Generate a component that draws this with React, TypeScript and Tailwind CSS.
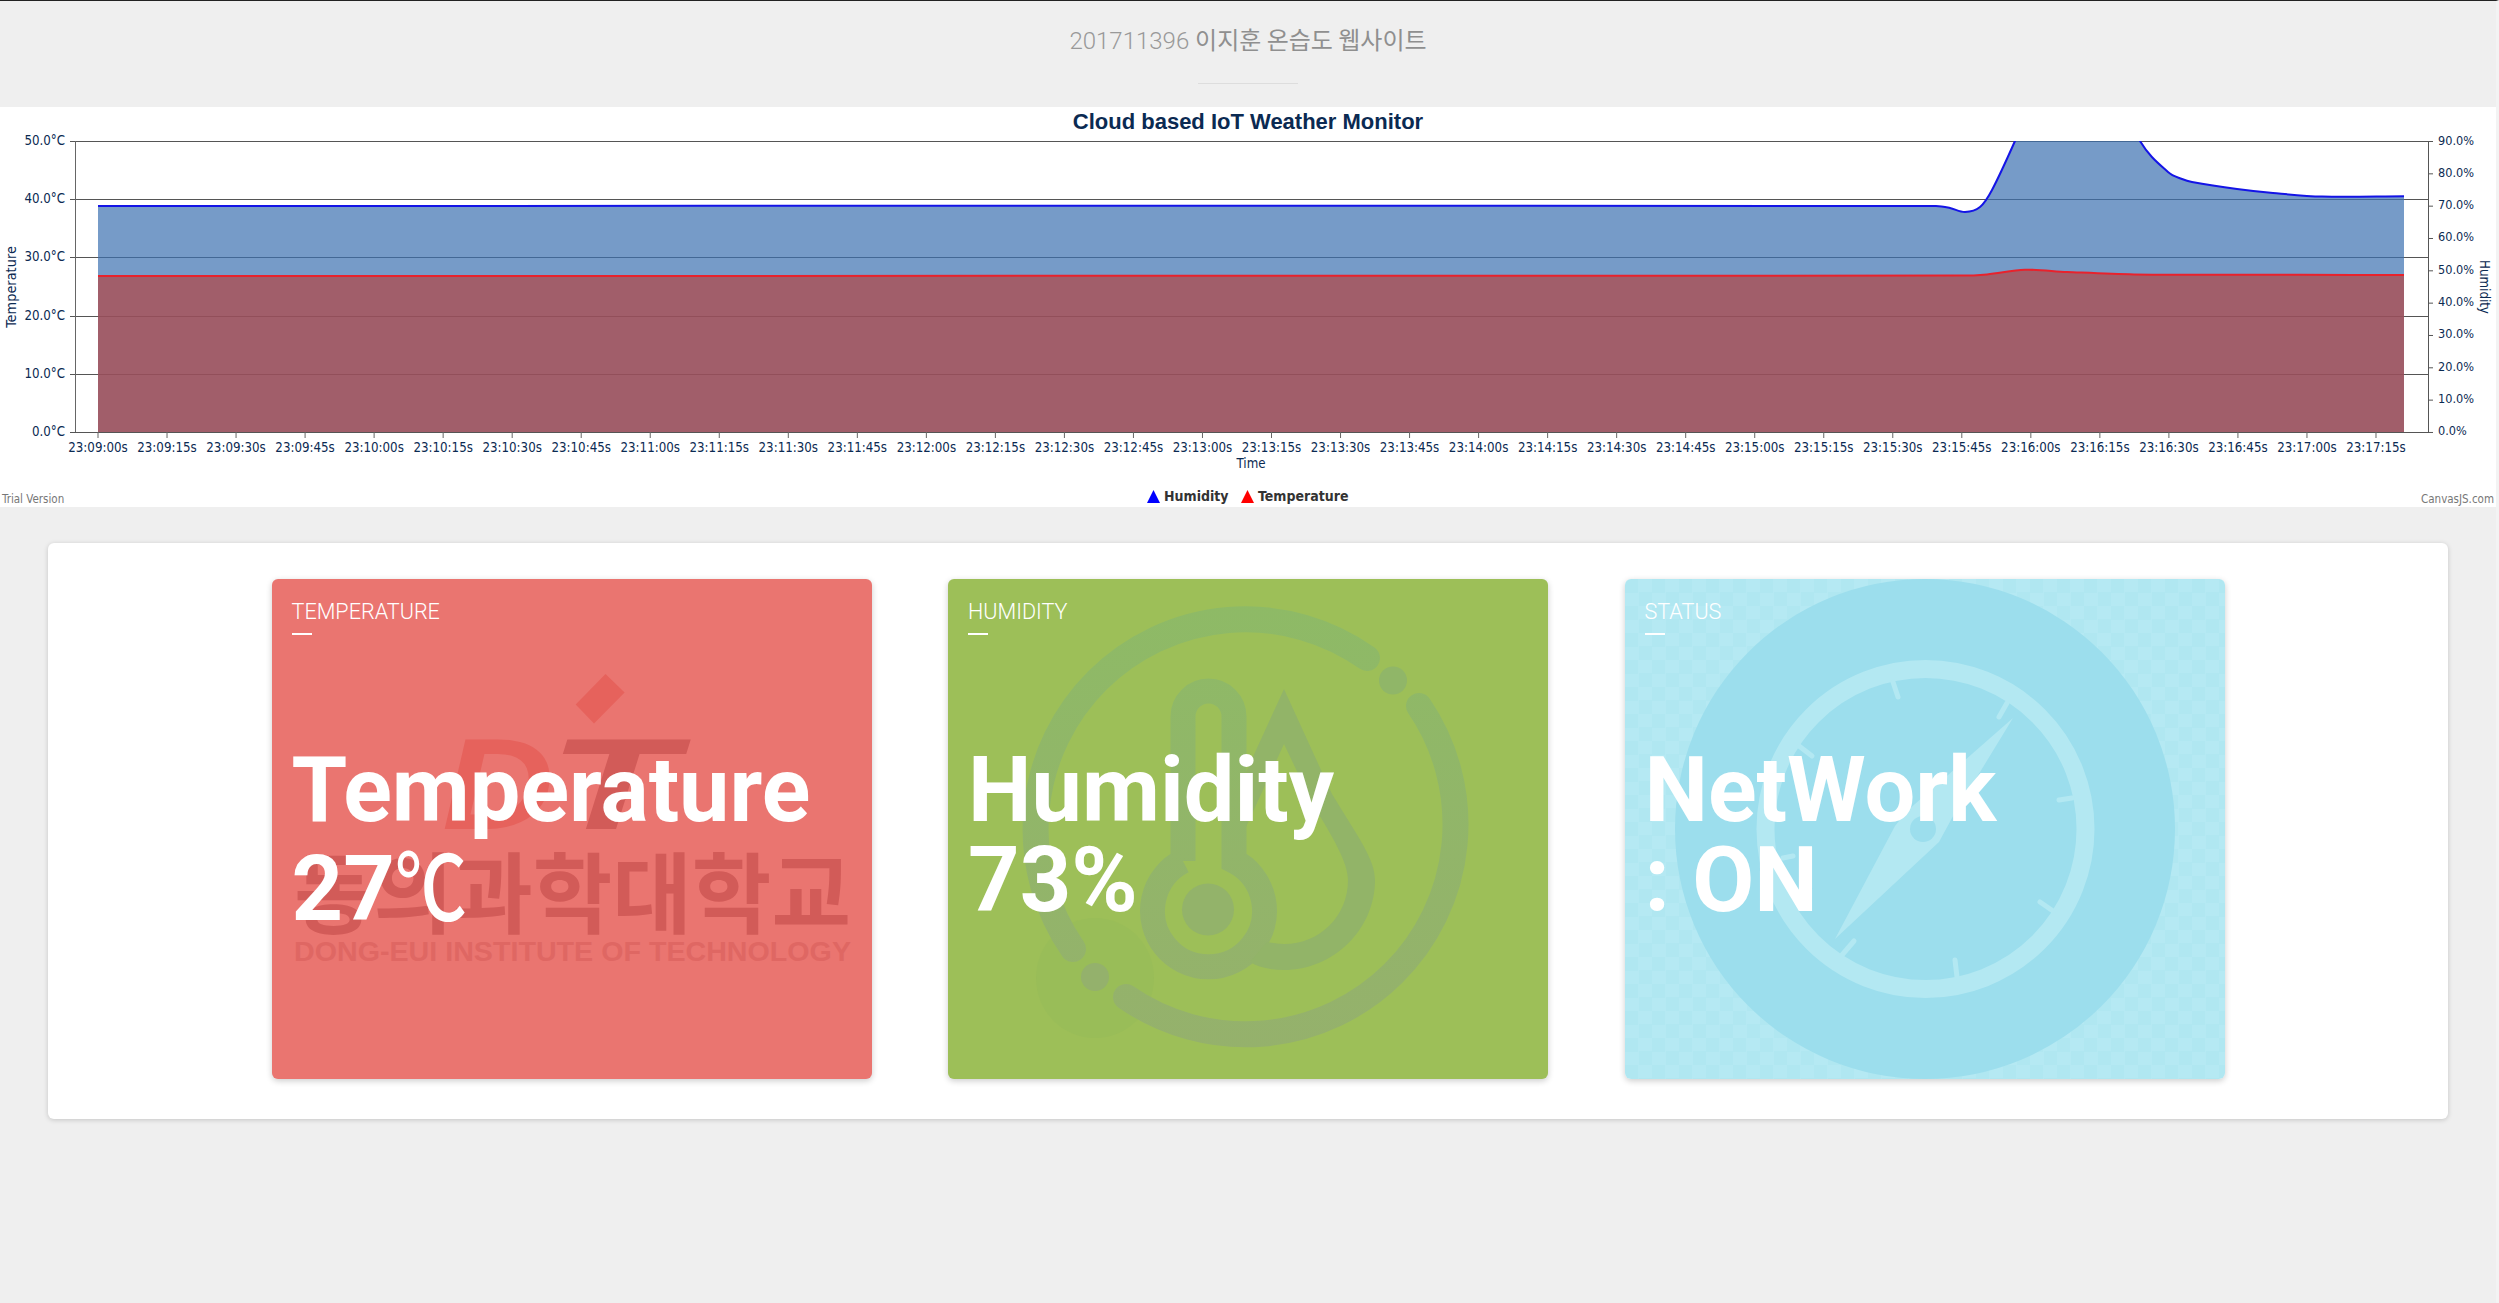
const xLabels = Array.from({ length: 34 }, (_, i) => {
  const total = 9 * 60 + i * 15;
  const min = String(Math.floor(total / 60)).padStart(2, '0');
  const sec = String(total % 60).padStart(2, '0');
  return { x: 98 + i * 69.03, text: `23:${min}:${sec}s` };
});

const gridYs = [141.5, 199.5, 257.5, 316.5, 374.5, 432.5];
const tempLabels = ['50.0°C', '40.0°C', '30.0°C', '20.0°C', '10.0°C', '0.0°C'];
const humLabels = ['90.0%', '80.0%', '70.0%', '60.0%', '50.0%', '40.0%', '30.0%', '20.0%', '10.0%', '0.0%'];

const humidity: [number, number][] = [
  [98, 206], [1936, 206], [1950, 208], [1965, 212], [1980, 207], [1992, 190], [2015, 141], [2032, 100],
  [2125, 100], [2140, 141], [2168, 172], [2182, 179], [2192, 182], [2237, 189], [2273, 193], [2322, 196.6], [2404, 196.3],
];
const temperature: [number, number][] = [
  [98, 276], [1960, 275.6], [1987, 274.4], [2025, 269.8], [2067, 272], [2134, 274.4], [2300, 274.8], [2404, 275],
];

// catmull-rom through the samples, canvasjs splineArea looks about like this
function spline(pts: [number, number][]) {
  let d = `M${pts[0][0]} ${pts[0][1]}`;
  for (let i = 0; i < pts.length - 1; i++) {
    const p0 = pts[Math.max(i - 1, 0)];
    const p1 = pts[i];
    const p2 = pts[i + 1];
    const p3 = pts[Math.min(i + 2, pts.length - 1)];
    const dx = p2[0] - p1[0];
    const m1 = ((p2[1] - p0[1]) / (p2[0] - p0[0] || 1)) * dx;
    const m2 = ((p3[1] - p1[1]) / (p3[0] - p1[0] || 1)) * dx;
    d += ` C${p1[0] + dx / 3} ${p1[1] + m1 / 3} ${p2[0] - dx / 3} ${p2[1] - m2 / 3} ${p2[0]} ${p2[1]}`;
  }
  return d;
}

function WeatherChart() {
  const humLine = spline(humidity);
  const tempLine = spline(temperature);
  return (
    <svg viewBox="0 107 2496 400" className="block h-[400px] w-full bg-white font-['DejaVu_Sans_Condensed','DejaVu_Sans',sans-serif]">
      <defs>
        <clipPath id="plot">
          <rect x="75" y="141" width="2353" height="292" />
        </clipPath>
      </defs>
      <text x="1248" y="129" textAnchor="middle" className="fill-[#0b2a52] font-['Liberation_Sans',sans-serif] text-[22px] font-bold">
        Cloud based IoT Weather Monitor
      </text>

      {gridYs.map((y) => (
        <line key={y} x1="70" x2="2428" y1={y} y2={y} className="stroke-[#555555]" />
      ))}
      <line x1="75.5" x2="75.5" y1="141" y2="432" className="stroke-[#666666]" />
      <line x1="2428.5" x2="2428.5" y1="141" y2="433" className="stroke-[#555555]" />

      <g clipPath="url(#plot)">
        <path d={`${humLine} L2404 432 L98 432 Z`} className="fill-[#3c71b0] opacity-70" />
        <path d={`${tempLine} L2404 432 L98 432 Z`} className="fill-[#b44542] opacity-70" />
        <path d={humLine} fill="none" className="stroke-[#1414e6]" strokeWidth="2" />
        <path d={tempLine} fill="none" className="stroke-[#e8222c]" strokeWidth="2" />
      </g>

      {xLabels.map((l) => (
        <g key={l.text}>
          <line x1={l.x} x2={l.x} y1="432" y2="438" className="stroke-[#666666]" />
          <text x={l.x} y="452" textAnchor="middle" className="fill-[#0b2a52] text-[13.2px]">
            {l.text}
          </text>
        </g>
      ))}
      {tempLabels.map((t, i) => (
        <text key={t} x="65" y={gridYs[i] + 3} textAnchor="end" className="fill-[#0b2a52] text-[13.2px]">
          {t}
        </text>
      ))}
      {humLabels.map((t, i) => (
        <g key={t}>
          <line x1="2428" x2="2433" y1={141.5 + i * 32.33} y2={141.5 + i * 32.33} className="stroke-[#555555]" />
          <text x="2438" y={144.5 + i * 32.33} className="fill-[#0b2a52] text-[12.6px]">
            {t}
          </text>
        </g>
      ))}

      <text x="1251" y="468" textAnchor="middle" className="fill-[#0b2a52] text-[13.2px]">Time</text>
      <text transform="translate(16 287) rotate(-90)" textAnchor="middle" className="fill-[#0b2a52] text-[14.4px]">Temperature</text>
      <text transform="translate(2480 287) rotate(90)" textAnchor="middle" className="fill-[#0b2a52] text-[13.2px]">Humidity</text>

      <polygon points="1147,503 1160,503 1153.5,490" className="fill-[#0000ff]" />
      <text x="1164" y="501" className="fill-[#333333] text-[14px] font-bold">Humidity</text>
      <polygon points="1241,503 1254,503 1247.5,490" className="fill-[#ff0000]" />
      <text x="1258" y="501" className="fill-[#333333] text-[14px] font-bold">Temperature</text>

      <text x="2" y="503" className="fill-[#777777] text-[11.5px]">Trial Version</text>
      <text x="2494" y="503" textAnchor="end" className="fill-[#777777] text-[11.5px]">CanvasJS.com</text>
    </svg>
  );
}

function SchoolLogo() {
  return (
    <svg viewBox="0 0 600 500" className="absolute inset-0 h-full w-full">
      <polygon points="333.5,95 352.6,113.6 322,144.6 303.7,125.6" className="fill-[#e6625c]" />
      <text x="170" y="250" textLength="112" lengthAdjust="spacingAndGlyphs" className="fill-[#e6625c] font-['Liberation_Sans',sans-serif] text-[129px] font-bold italic">D</text>
      <text x="276" y="250" textLength="128" lengthAdjust="spacingAndGlyphs" className="fill-[#d25b58] font-['Liberation_Sans',sans-serif] text-[129px] font-bold italic">T</text>
      <text x="22" y="347" textLength="557" lengthAdjust="spacingAndGlyphs" className="fill-[#d25b58] font-['Noto_Sans_CJK_KR',sans-serif] text-[88px] font-bold">동의과학대학교</text>
      <text x="22" y="382" textLength="557" lengthAdjust="spacingAndGlyphs" className="fill-[#df6763] font-['Liberation_Sans',sans-serif] text-[28.5px] font-bold">DONG-EUI INSTITUTE OF TECHNOLOGY</text>
    </svg>
  );
}

function ClimateIcon() {
  return (
    <svg viewBox="0 0 600 500" className="absolute inset-0 h-full w-full">
      <defs>
        <linearGradient id="climate" gradientUnits="userSpaceOnUse" x1="0" y1="26" x2="0" y2="472">
          <stop offset="0" stopColor="#8eba66" />
          <stop offset="1" stopColor="#95b16c" />
        </linearGradient>
      </defs>
      <ellipse cx="147" cy="399" rx="59" ry="60" className="fill-[#99bd58]" />
      <g fill="none" stroke="url(#climate)" strokeWidth="26" strokeLinecap="round">
        <path d="M178 418 A210 210 0 0 0 471 127" />
        <path d="M419 79 A210 210 0 0 0 125 370" />
        <path d="M235 282 V137.5 a25.5 25.5 0 0 1 51 0 V282 A56 56 0 1 1 235 282" strokeLinecap="butt" strokeWidth="25" />
      </g>
      <ellipse cx="445" cy="101.5" rx="14" ry="14" className="fill-[#90b668]" />
      <ellipse cx="147" cy="398" rx="14" ry="14" className="fill-[#94b16c]" />
      <ellipse cx="260" cy="330.5" rx="26" ry="26" className="fill-[#93b36a]" />
      <path
        d="M298 193 L336 110 L384 215 C410 258 427 280 427 301 C427 351 385 391 336 391 C322 391 310 388 302 383 L319 363 C325 364 330 365 336 365 C372 365 400 337 400 301 C400 284 385 258 365 226 L336 165 L298 248 Z"
        className="fill-[#92b468]"
      />
    </svg>
  );
}

const compassTicks = [
  [268, 103, 273, 118],
  [382, 124, 374, 138],
  [447, 219, 434, 221],
  [428, 332, 415, 323],
  [332, 398, 330, 381],
  [217, 376, 229, 362],
  [158, 279, 168, 277],
  [174, 167, 187, 177],
];

function CompassIcon() {
  return (
    <svg viewBox="0 0 600 500" className="absolute inset-0 h-full w-full">
      <circle cx="300" cy="250" r="250" className="fill-[#9cdeed]" />
      <circle cx="300.5" cy="250" r="160" fill="none" strokeWidth="18" className="stroke-[#b3e8f2]" />
      {compassTicks.map(([x1, y1, x2, y2]) => (
        <line key={x1} x1={x1} y1={y1} x2={x2} y2={y2} strokeWidth="5" strokeLinecap="round" className="stroke-[#b3e8f2]" />
      ))}
      <polygon points="388,139 327,239 314,263 210,360 270,247 282,232" className="fill-[#b3e8f2]" />
      <circle cx="298" cy="250" r="13" className="fill-[#9cdeed]" />
    </svg>
  );
}

function StatCard({ label, line1, line2, className, children }: { label: string; line1: string; line2: React.ReactNode; className: string; children: React.ReactNode }) {
  return (
    <div className={`relative h-[500px] w-[600px] overflow-hidden rounded-[6px] p-5 text-white shadow-[0_2px_6px_rgba(0,0,0,0.2)] ${className}`}>
      {children}
      <div className="relative">
        <div className="text-[21.6px] font-light leading-[26px]">{label}</div>
        <div className="mt-[8px] h-[2px] w-5 bg-white" />
        <div className="mt-[111px] text-[90px] font-bold leading-[90px]">
          {line1}
          <br />
          {line2}
        </div>
      </div>
    </div>
  );
}

export default function App() {
  return (
    <div className="min-h-screen border-t border-r-[3px] border-t-[#222222] border-r-[#f3f3f3] bg-[#efefef] font-['Roboto','Noto_Sans_CJK_KR',sans-serif]">
      <header className="flex h-[106px] flex-col items-center pt-[23px]">
        <h1 className="text-[24px] font-light leading-[30px] text-[#999999]">
          201711396 <span className="font-['Noto_Sans_CJK_KR',sans-serif] font-normal text-[#8f8f8f]">이지훈 온습도 웹사이트</span>
        </h1>
        <div className="mt-[27px] h-px w-[100px] bg-[#dddddd]" />
      </header>

      <WeatherChart />

      <main className="px-[48px] pt-[36px]">
        <section className="flex justify-center gap-[76.5px] rounded-[6px] bg-white pb-[40px] pt-[36px] shadow-[0_1px_5px_rgba(0,0,0,0.18)]">
          <StatCard
            label="TEMPERATURE"
            line1="Temperature"
            line2={
              <>
                27
                <span className="inline-block w-[70px] origin-left scale-x-[0.8] font-['Noto_Sans_CJK_KR',sans-serif] font-medium">℃</span>
              </>
            }
            className="bg-[#ea7570]"
          >
            <SchoolLogo />
          </StatCard>
          <StatCard label="HUMIDITY" line1="Humidity" line2="73%" className="bg-[#9dbf58]">
            <ClimateIcon />
          </StatCard>
          <StatCard
            label="STATUS"
            line1="NetWork"
            line2=": ON"
            className="bg-[repeating-conic-gradient(#b5e9f3_0_25%,#b0e7f1_0_50%)] bg-[length:27px_27px]"
          >
            <CompassIcon />
          </StatCard>
        </section>
      </main>
    </div>
  );
}
